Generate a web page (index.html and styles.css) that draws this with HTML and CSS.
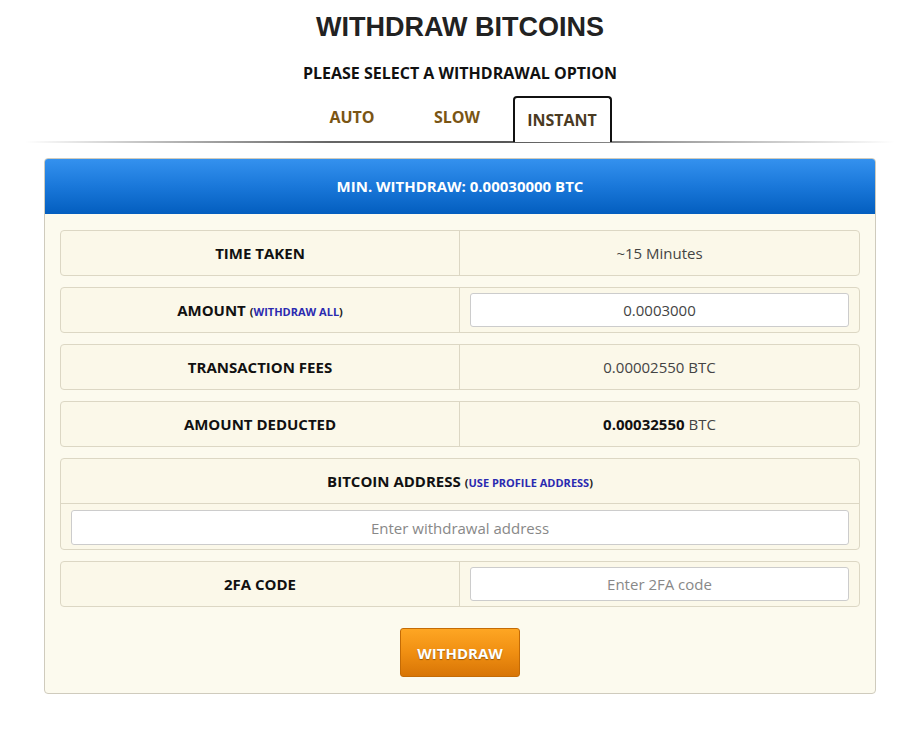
FILE: index.html
```html
<!DOCTYPE html>
<html lang="en">
<head>
  <meta charset="UTF-8">
  <meta name="viewport" content="width=device-width, initial-scale=1.0">
  <title>Withdraw Bitcoins</title>
  <link rel="stylesheet" href="styles.css">
</head>
<body>
  <div class="page">
    <h1 class="title">WITHDRAW BITCOINS</h1>
    <h2 class="subtitle">PLEASE SELECT A WITHDRAWAL OPTION</h2>

    <div class="tabs-wrap">
      <ul class="tabs">
        <li class="tab">AUTO</li>
        <li class="tab">SLOW</li>
        <li class="tab active">INSTANT</li>
      </ul>
      <div class="tabs-line"></div>
    </div>

    <div class="panel">
      <div class="panel-head">MIN. WITHDRAW: 0.00030000 BTC</div>
      <div class="panel-body">
        <div class="row">
          <div class="cell label">TIME TAKEN</div>
          <div class="cell value">~15 Minutes</div>
        </div>
        <div class="row">
          <div class="cell label">AMOUNT <span class="hint">(<a>WITHDRAW ALL</a>)</span></div>
          <div class="cell field"><input type="text" class="input" value="0.0003000"></div>
        </div>
        <div class="row">
          <div class="cell label">TRANSACTION FEES</div>
          <div class="cell value">0.00002550 BTC</div>
        </div>
        <div class="row">
          <div class="cell label">AMOUNT DEDUCTED</div>
          <div class="cell value"><strong>0.00032550</strong> BTC</div>
        </div>
        <div class="row stacked">
          <div class="cell label">BITCOIN ADDRESS <span class="hint">(<a>USE PROFILE ADDRESS</a>)</span></div>
          <div class="cell field"><input type="text" class="input" placeholder="Enter withdrawal address"></div>
        </div>
        <div class="row">
          <div class="cell label">2FA CODE</div>
          <div class="cell field"><input type="text" class="input" placeholder="Enter 2FA code"></div>
        </div>
        <div class="actions">
          <button class="btn-withdraw">WITHDRAW</button>
        </div>
      </div>
    </div>
  </div>
</body>
</html>
```

FILE: styles.css
```css
body {
  margin: 0;
  background: #fff;
  font-family: "Open Sans", Arial, sans-serif;
  color: #222;
}
.page {
  width: 832px;
  margin: 0 auto;
  padding-left: 1px;
}
.title {
  font-family: "Liberation Sans", Arial, sans-serif;
  font-size: 27px;
  font-weight: bold;
  color: #222;
  text-align: center;
  margin: 11px 0 0;
  line-height: 32px;
}
.subtitle {
  font-size: 16px;
  font-weight: bold;
  color: #111;
  text-align: center;
  margin: 19px 0 0;
  line-height: 22px;
}
.tabs-wrap {
  margin: 12px -19px 0;
  position: relative;
}
.tabs {
  list-style: none;
  margin: 0;
  padding: 0;
  display: flex;
  justify-content: center;
  gap: 6px;
  position: relative;
  z-index: 1;
  transform: translateX(-3px);
}
.tab {
  width: 99px;
  height: 45px;
  box-sizing: border-box;
  display: flex;
  align-items: center;
  justify-content: center;
  font-size: 16px;
  font-weight: bold;
  color: #7a5514;
  padding-bottom: 4px;
}
.tab.active {
  background: #fff;
  border: 2px solid #111;
  border-bottom: none;
  border-radius: 4px 4px 0 0;
  color: #4a3a22;
  padding-top: 0;
  padding-bottom: 1px;
  height: 46px;
  margin-bottom: -1px;
}
.tabs-line {
  height: 2px;
  background: linear-gradient(to right, rgba(0, 0, 0, 0) 0%, #555 35%, #444 55%, rgba(0, 0, 0, 0) 100%);
  opacity: 0.9;
}
.panel {
  margin-top: 15px;
  border: 1px solid #cfcbbd;
  border-radius: 4px;
  background: #fcfaee;
  overflow: hidden;
}
.panel-head {
  height: 56px;
  background: linear-gradient(to bottom, #3592ef 0%, #1a78da 50%, #035ebf 100%);
  color: #fff;
  font-size: 15px;
  font-weight: bold;
  display: flex;
  align-items: center;
  justify-content: center;
  margin: -1px -1px 0;
  border-radius: 4px 4px 0 0;
}
.panel-body {
  padding: 16px 15px 16px;
  display: flex;
  flex-direction: column;
  gap: 11px;
}
/* two equal columns: label | value */
.row {
  display: grid;
  grid-template-columns: minmax(0, 1fr) minmax(0, 1fr);
  border: 1px solid #dcd7c4;
  border-radius: 4px;
  background: #fbf8e9;
  min-height: 44px;
}
.cell {
  display: flex;
  align-items: center;
  justify-content: center;
  font-size: 15px;
}
.label {
  font-weight: bold;
  color: #111;
  border-right: 1px solid #dcd7c4;
}
.value {
  color: #444;
}
.value strong {
  color: #111;
  margin-right: 4px;
}
.hint {
  font-size: 11px;
  margin-left: 4px;
  color: #222;
  position: relative;
  top: 1px;
}
.hint a {
  color: #2a2ab0;
}
.field {
  padding: 5px 10px;
}
.input {
  width: 100%;
  height: 34px;
  box-sizing: border-box;
  border: 1px solid #ccc;
  border-radius: 3px;
  background: #fff;
  text-align: center;
  font-family: "Open Sans", Arial, sans-serif;
  font-size: 15px;
  color: #444;
}
.input::placeholder {
  color: #888;
}
.row.stacked {
  grid-template-columns: minmax(0, 1fr);
}
.row.stacked .label {
  border-right: none;
  border-bottom: 1px solid #dcd7c4;
  height: 44px;
}
.row.stacked .field {
  padding: 6px 10px 4px;
}
.row.stacked .input {
  height: 35px;
}
.actions {
  display: flex;
  justify-content: center;
  padding-top: 10px;
}
.btn-withdraw {
  width: 120px;
  height: 49px;
  border: 1px solid #c46b05;
  border-radius: 3px;
  background: linear-gradient(to bottom, #fea623 0%, #f08f12 50%, #d87506 100%);
  color: #fff;
  font-family: "Open Sans", Arial, sans-serif;
  font-size: 15px;
  font-weight: bold;
  text-shadow: 0 1px 1px rgba(0, 0, 0, 0.35);
  cursor: pointer;
}
```
